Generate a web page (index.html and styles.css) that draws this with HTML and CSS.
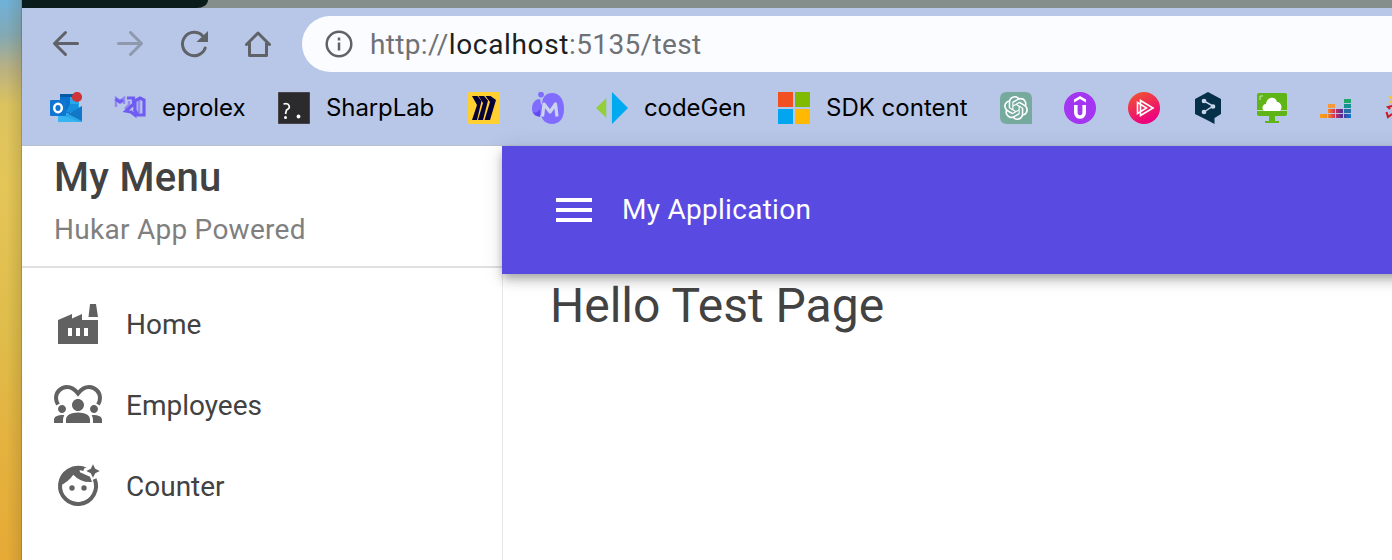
FILE: index.html
```html
<!DOCTYPE html>
<html lang="en">
<head>
<meta charset="utf-8">
<title>My Application</title>
<link rel="stylesheet" href="styles.css">
</head>
<body>
<div class="desktop">
  <div class="window">
    <div class="tabs"><div class="tab"></div></div>
    <div class="toolbar">
      <svg class="nav" viewBox="0 0 32 32"><path d="M27.500 15.500H5M15.500 4.500L4.500 15.500L15.500 26.500"/></svg>
      <svg class="nav dim" viewBox="0 0 32 32"><path d="M4.500 15.500H27M16.500 4.500L27.500 15.500L16.500 26.500"/></svg>
      <svg class="nav" viewBox="0 0 32 32"><path d="M27.200 20A11.700 11.700 0 1 1 24.700 8"/><path class="solid" d="M30 3V14H18.500Z"/></svg>
      <svg class="nav" viewBox="0 0 32 32"><path d="M4.500 16.500L16 5L27.500 16.500M7.500 15V27.500H24.500V15"/></svg>
      <div class="address">
        <svg class="info" viewBox="0 0 28 28"><circle cx="14" cy="14" r="12.300"/><path d="M14 12.500V20.500M14 7.500V10.500"/></svg>
        <span class="url">http://<b>localhost</b>:5135/test</span>
      </div>
    </div>
    <div class="bookmarks">
      <svg class="fav" viewBox="0 0 32 32"><path fill="#0758a5" d="M10 2H29V16H10Z"/><path fill="#28a8ea" d="M20 5H29V19H20Z"/><path fill="#0a70c9" d="M10 5H20V22H10Z"/><path fill="#1490df" d="M20 12H28V20H16Z"/><path fill="#28a8ea" d="M8 20L20 21L32 14V30H8Z"/><path fill="#1178c8" d="M18 22L32 14V29Z"/><path fill="#36b5f2" d="M8 22L30 30H8Z"/><rect fill="#0f77d1" y="8" width="16" height="16" rx="1"/><ellipse cx="8" cy="16" rx="3.800" ry="4.300" fill="none" stroke="#fff" stroke-width="2.500"/><circle cx="27" cy="5" r="5.100" fill="#d13438"/></svg>
      <div class="bookmark"><svg class="fav" viewBox="0 0 32 32"><g fill="none" stroke="#6f5cf3" stroke-width="3.200"><path stroke="#9489f0" stroke-width="2.500" d="M2 15V6L6 9L10 6V12M15 9V13L11 17M25 7V21"/><path d="M1.500 7L6 10L9 8M13 6H19.500V12L12 19L17 20L21 23V9L26 6L30 8V23H24L20 17"/></g></svg><span class="label eprolex">eprolex</span></div>
      <div class="bookmark"><svg class="fav" viewBox="0 0 32 32"><path fill="#2b2b2d" stroke="#4a4446" d="M.5.5H31.500V31.500H.5Z"/><path fill="none" stroke="#fff" stroke-width="1.700" d="M5.500 12C12 10.500 13 16 8.500 18L7.500 22"/><circle cx="7.500" cy="25.500" r="1.500" fill="#fff"/><circle cx="20.500" cy="24.500" r="1.900" fill="#fff"/></svg><span class="label sharp">SharpLab</span></div>
      <svg class="fav" viewBox="0 0 32 32"><rect width="32" height="32" rx="2" fill="#ffd02f"/><path fill="#050038" d="M4 4H9.500L13.500 9L9 28H4L9 13ZM10.500 4H16L20 8.500L15 28H10L15 11ZM17.500 4H22.500L28 8L22 28H16.500L22 10Z"/></svg>
      <svg class="fav" viewBox="0 0 32 32"><circle cx="9" cy="2.600" r="2.900" fill="#806cff"/><path fill="#806cff" d="M10 13C10 5 14 1 20 1C28 1 32 8 32 17C32 27 27 32 20 32C14 32 10 28 9 23C7 26 0 24 0 17C0 10 4 7 8 7L9 12Z"/><path fill="#5f48ef" d="M1 20Q5 22 8 17V25Q3 24 1 20"/><path fill="none" stroke="#cbd4ef" stroke-width="3.200" stroke-linejoin="round" d="M10.500 24.500L12 12L18 20L23.500 12L25 24.500"/></svg>
      <div class="bookmark"><svg class="fav" viewBox="0 0 32 32"><path fill="#93cf3b" d="M0 16L10.500 6V26Z"/><path fill="#adc9e5" d="M10.500 6H12V26H10.500M14 0H16V32H14Z"/><path fill="#00aaf0" d="M16 0L32 16L16 32Z"/></svg><span class="label codegen">codeGen</span></div>
      <div class="bookmark"><svg class="fav" viewBox="0 0 32 32"><path fill="#f35022" d="M0 0H15V15H0Z"/><path fill="#80bb01" d="M17 0H32V15H17Z"/><path fill="#02a5f0" d="M0 17H15V32H0Z"/><path fill="#ffb902" d="M17 17H32V32H17Z"/></svg><span class="label sdk">SDK content</span></div>
      <svg class="fav" viewBox="0 0 32 32"><path fill="#75aa9c" d="M7 0H25Q32 0 32 7V32H7Q0 32 0 25V7Q0 0 7 0Z"/><g transform="translate(4 4)"><path fill="#fff" d="M22.282 9.821a5.985 5.985 0 0 0-.516-4.910 6.046 6.046 0 0 0-6.510-2.900A6.065 6.065 0 0 0 4.981 4.182a5.985 5.985 0 0 0-3.998 2.900 6.046 6.046 0 0 0 .743 7.097 5.980 5.980 0 0 0 .511 4.911 6.051 6.051 0 0 0 6.515 2.900A5.985 5.985 0 0 0 13.260 24a6.056 6.056 0 0 0 5.772-4.206 5.990 5.990 0 0 0 3.998-2.900 6.056 6.056 0 0 0-.748-7.073zM13.260 22.430a4.476 4.476 0 0 1-2.876-1.040l.141-.081 4.779-2.758a.795.795 0 0 0 .392-.681v-6.737l2.020 1.169a.071.071 0 0 1 .038.052v5.583a4.504 4.504 0 0 1-4.494 4.493zM3.600 18.304a4.471 4.471 0 0 1-.535-3.014l.142.085 4.783 2.759a.771.771 0 0 0 .781 0l5.843-3.369v2.332a.080.080 0 0 1-.033.062L9.740 19.950a4.500 4.500 0 0 1-6.140-1.646zM2.341 7.896a4.485 4.485 0 0 1 2.366-1.973V11.600a.766.766 0 0 0 .388.677l5.814 3.354-2.020 1.169a.076.076 0 0 1-.071 0l-4.830-2.787A4.504 4.504 0 0 1 2.341 7.872zm16.597 3.856l-5.833-3.388L15.119 7.200a.076.076 0 0 1 .071 0l4.830 2.791a4.494 4.494 0 0 1-.676 8.105v-5.678a.790.790 0 0 0-.407-.667zm2.011-3.024l-.142-.085-4.774-2.782a.776.776 0 0 0-.785 0L9.409 9.230V6.897a.066.066 0 0 1 .028-.061l4.830-2.787a4.500 4.500 0 0 1 6.680 4.660zM8.307 12.863l-2.020-1.164a.080.080 0 0 1-.038-.057V6.074a4.500 4.500 0 0 1 7.376-3.453l-.142.081L8.704 5.460a.795.795 0 0 0-.393.681zm1.097-2.366l2.602-1.500 2.607 1.500v3l-2.597 1.500-2.607-1.500z"/></g></svg>
      <svg class="fav" viewBox="0 0 32 32"><circle cx="16" cy="16" r="16" fill="#a435f0"/><path fill="#fff" d="M16 4L22 7.500V10.500L16 7L10 10.500V7.500Z"/><path fill="none" stroke="#fff" stroke-width="3.600" d="M11.800 13V20.500C11.800 26.500 20.200 26.500 20.200 20.500V13"/></svg>
      <svg class="fav" viewBox="0 0 32 32"><defs><linearGradient id="pink" x1="0" y1="0" x2=".45" y2="1"><stop stop-color="#f05a28"/><stop offset="1" stop-color="#ed0080"/></linearGradient></defs><circle cx="16" cy="16" r="16" fill="url(#pink)"/><path fill="none" stroke="#fff" stroke-width="1.600" d="M12.500 8.500L25 16L12.500 23.500Z M9.500 10.500L18.500 16L9.500 21.500Z"/></svg>
      <svg class="fav" viewBox="0 0 32 32"><path fill="#062f49" d="M16 0L29 7V22L22.500 26V32L16 28.500L3 22V7Z"/><g stroke="#c7d4ea" fill="#c7d4ea" stroke-width="1.500"><path fill="none" d="M12 9L21 14L12 20"/><circle cx="12" cy="9" r="1.600"/><circle cx="21" cy="14.500" r="1.600"/><circle cx="12" cy="20" r="1.600"/></g></svg>
      <svg class="fav" viewBox="0 0 32 32"><rect x="1" y="1" width="30" height="23" rx="2" fill="#5eb515"/><path stroke="#c1d8b9" d="M1 18.500H31"/><path fill="#5eb515" d="M13 23H19V29H23V31H9V29H13Z"/><path fill="#fff" d="M9 19C5 18 6 12 10 12C11 4 20 4 21 10C26 10 27 18 23 19Z"/><path fill="none" stroke="#c9e7ad" d="M4 8V4H7"/></svg>
      <svg class="fav" viewBox="0 0 32 32"><defs><linearGradient id="row" gradientUnits="userSpaceOnUse" x1="0" y1="0" x2="31" y2="0"><stop stop-color="#f9a01b"/><stop offset=".25" stop-color="#f68a24"/><stop offset=".47" stop-color="#d93258"/><stop offset=".7" stop-color="#5b2a95"/><stop offset="1" stop-color="#087bd0"/></linearGradient></defs><path fill="url(#row)" d="M0 22H7V26H0M8 22H15V26H8M8 17H15V21H8M16 22H23V26H16M16 17H23V21H16M24 22H31V26H24"/><path fill="#f59a38" d="M8 12H15V16H8Z"/><path fill="#246fa8" d="M24 17H31V21H24Z"/><path fill="#15928f" d="M24 12H31V16H24Z"/><path fill="#1fa866" d="M24 7H31V11H24Z"/></svg>
      <svg class="fav" viewBox="0 0 32 32"><path fill="none" stroke="#f5c62b" stroke-width="2" d="M5 4L8 7M5 11L8 9"/><path fill="none" stroke="#cc1820" stroke-width="2" d="M8 14L4 15L6 17M2.500 20L4 25L8 22"/></svg>
    </div>
    <div class="app">
      <aside class="sidebar">
        <header class="brand"><h1>My Menu</h1><p>Hukar App Powered</p></header>
        <nav class="menu">
          <a><svg class="icon" viewBox="0 0 48 48"><path d="M4 19L18 13V17.500L28 13V19H44V43H4ZM34.500 16L36 3H42L44 16Z"/><path fill="#fff" d="M14 27H18V35H14M22 27H26V35H22M30 27H34V35H30Z"/></svg><span>Home</span></a>
          <a><svg class="icon" viewBox="0 0 48 48"><path class="ring" d="M4 22.500C2.500 20 2 18 2 16A11 11 0 0 1 13 5C18 5 21 7.500 24 11.500C27 7.500 30 5 35 5A11 11 0 0 1 46 16C46 18 45.500 20 44 22.500"/><path transform="translate(0 5) scale(2)" d="M4 13c1.100 0 2-.9 2-2s-.9-2-2-2-2 .9-2 2 .9 2 2 2zM5.130 14.100C4.760 14.040 4.390 14 4 14c-.99 0-1.930.21-2.780.58C.48 14.900 0 15.620 0 16.430V18h4.500v-1.610c0-.83.230-1.610.63-2.290zM20 13c1.100 0 2-.9 2-2s-.9-2-2-2-2 .9-2 2 .9 2 2 2zM24 16.430c0-.81-.48-1.530-1.220-1.850C21.930 14.210 20.990 14 20 14c-.39 0-.76.040-1.130.10.40.68.63 1.460.63 2.290V18H24zM16.240 13.650C15.070 13.130 13.630 12.750 12 12.750s-3.070.39-4.240.90C6.680 14.130 6 15.210 6 16.390V18h12v-1.610c0-1.180-.68-2.260-1.760-2.740zM12 12c1.660 0 3-1.340 3-3s-1.340-3-3-3-3 1.340-3 3 1.340 3 3 3z"/></svg><span>Employees</span></a>
          <a><svg class="icon" viewBox="0 0 48 48"><path class="ring" d="M40.600 16A18 18 0 1 1 30 6"/><path d="M5 23Q14 19.500 19.300 11.700Q27 20 38 19L36 13.700L26 9.300L25.500 7L32.700 4.500C19 0 7 7 5 23ZM39 1.300L41.200 5.800L45.700 8L41.200 10.200L39 14.700L36.800 10.200L32.300 8L36.800 5.800Z"/><circle cx="18" cy="25" r="2.700"/><circle cx="30" cy="25" r="2.700"/></svg><span>Counter</span></a>
        </nav>
      </aside>
      <main class="content">
        <header class="appbar"><svg class="burger" viewBox="0 0 36 24"><path d="M0 0H36V4H0M0 10H36V14H0M0 20H36V24H0Z"/></svg><span>My Application</span></header>
        <h2>Hello Test Page</h2>
      </main>
    </div>
  </div>
</div>
</body>
</html>
```
FILE: styles.css
```css
* { box-sizing: border-box; }
body { margin: 0; font-family: Roboto, sans-serif; color: #424242; }
h1, h2, p { margin: 0; }
svg { display: block; flex: none; }
.desktop { width: 1392px; height: 560px; overflow: hidden; padding-left: 22px; background: linear-gradient(90deg, rgba(90,80,35,0) 0 7px, rgba(90,80,35,.17) 21px, rgba(70,60,0,.55) 22px), linear-gradient(180deg, #6fb1da 0, #83a9b4 35px, #b9b083 68px, #dcc35f 105px, #e4c557 185px, #dfbd4b 330px, #e4b340 430px, #e6aa35 560px); }
.window { width: 1370px; height: 560px; overflow: hidden; background: #fff; display: flex; flex-direction: column; }
.tabs { height: 8px; flex: none; background: #858e8b; overflow: hidden; }
.tab { width: 186px; height: 8px; background: #0a1c1b; border-bottom-right-radius: 14px 10px; }
.toolbar { height: 72px; flex: none; background: #b8c6e8; display: flex; align-items: center; gap: 32px; padding-left: 28px; }
.nav { width: 32px; height: 32px; fill: none; stroke: #5f6368; stroke-width: 3; stroke-linecap: round; stroke-linejoin: round; }
.nav .solid { fill: #5f6368; stroke: none; }
.dim { opacity: .45; }
.address { height: 56px; flex: 1; margin-left: -4px; border-radius: 28px 0 0 28px; background: #fbfcff; display: flex; align-items: center; padding-left: 23px; gap: 17px; }
.info { width: 28px; height: 28px; fill: none; stroke: #5f6368; stroke-width: 2.5; }
.url { font-size: 28px; letter-spacing: .35px; color: #6f7175; white-space: nowrap; }
.url b { font-weight: 400; letter-spacing: .65px; color: #1d1e21; }
.bookmarks { height: 66px; flex: none; display: flex; align-items: flex-start; gap: 32px; padding: 12px 0 0 28px; background: #b8c6e8; border-bottom: 1px solid #b4bfd0; overflow: hidden; }
.bookmark { display: flex; align-items: center; gap: 16px; height: 32px; }
.fav { width: 32px; height: 32px; }
.label { font: 24px/32px Inter, sans-serif; letter-spacing: -.1px; color: #000; white-space: nowrap; }
.eprolex { width: 84px; } .sharp { width: 110px; } .codegen { width: 102px; } .sdk { width: 142px; letter-spacing: 0; }
.app { display: flex; flex: 1; min-height: 0; }
.sidebar { width: 480px; flex: none; }
.brand { height: 122px; padding: 8px 32px 0; border-bottom: 2px solid #e0e0e0; }
.brand h1 { font-size: 40px; line-height: 47px; font-weight: 500; letter-spacing: .3px; }
.brand p { margin-top: 12px; font-size: 28px; line-height: 34px; color: #7f7f7f; letter-spacing: .27px; }
.menu { padding-top: 16px; }
.menu a { height: 81px; padding-left: 32px; display: flex; align-items: center; gap: 24px; font-size: 28px; }
.icon { width: 48px; height: 48px; margin-top: 1px; fill: #616161; }
.ring { fill: none; stroke: #616161; stroke-width: 4; }
.content { flex: 1; min-width: 0; border-left: 1px solid #e8e8e8; }
.appbar { height: 128px; margin: 0 -30px 0 -1px; padding: 0 0 2px 54px; display: flex; align-items: center; gap: 30px; background: #594ae2; color: #fff; font-size: 28px; letter-spacing: .28px; box-shadow: 0 4px 8px -2px rgba(0,0,0,.2), 0 8px 10px rgba(0,0,0,.14), 0 2px 20px rgba(0,0,0,.12); }
.burger { width: 36px; height: 24px; margin-top: 2px; fill: #fff; }
.content h2 { margin: 4px 0 0 47px; font-size: 48px; line-height: 56px; font-weight: 400; }
```
